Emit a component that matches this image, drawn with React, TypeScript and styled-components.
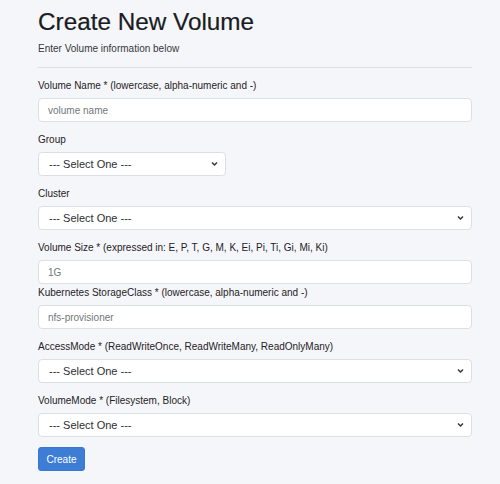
import React from "react";
import styled, { createGlobalStyle } from "styled-components";

const Global = createGlobalStyle`
  html, body { margin: 0; padding: 0; background: #f5f6f9; }
  body { font-family: "Liberation Sans", Arial, sans-serif; color: #212529; }
  * { box-sizing: border-box; }
`;

const Page = styled.div`
  padding: 7px 28px 0 38px;
  width: 500px;
  min-height: 484px;
  background: #f5f6f9;
`;

const Title = styled.h1`
  margin: 0;
  font-family: "Liberation Sans", Arial, sans-serif;
  font-size: 24.3px;
  font-weight: 400;
  line-height: 30px;
  color: #1a1c1f;
  -webkit-text-stroke: 0.2px #1a1c1f;
`;

const Subtitle = styled.p`
  margin: 4px 0 0;
  font-size: 10px;
  line-height: 16px;
  color: #35383c;
`;

const Rule = styled.hr`
  margin: 10px 0 0;
  border: 0;
  border-top: 1px solid #dcdee2;
`;

const Form = styled.form`
  display: flex;
  flex-direction: column;
  margin-top: 11px;
`;

const Field = styled.div<{ $mb: number }>`
  display: flex;
  flex-direction: column;
  margin-bottom: ${(p) => p.$mb}px;
`;

const Label = styled.label`
  font-size: 10px;
  line-height: 14px;
  margin-bottom: 5px;
  color: #1f2226;
  white-space: nowrap;
`;

const Input = styled.input`
  height: 24px;
  width: 100%;
  border: 1px solid #dcdfe3;
  border-radius: 4px;
  background: #fff;
  padding: 0 9px;
  font-family: inherit;
  font-size: 10px;
  color: #212529;
  &::placeholder { color: #72777c; }
`;

const SelectWrap = styled.div<{ $w?: number }>`
  position: relative;
  width: ${(p) => (p.$w ? `${p.$w}px` : "100%")};
`;

const Select = styled.select`
  appearance: none;
  -webkit-appearance: none;
  height: 24px;
  width: 100%;
  border: 1px solid #dcdfe3;
  border-radius: 4px;
  background: #fff;
  padding: 0 10px;
  font-family: inherit;
  font-size: 11px;
  color: #2b2f33;
`;

const Chevron = styled.svg`
  position: absolute;
  right: 8px;
  top: 9px;
  width: 7px;
  height: 6px;
  pointer-events: none;
`;

const Button = styled.button`
  align-self: flex-start;
  height: 24px;
  width: 47px;
  padding: 0;
  border: 1px solid #3a78d0;
  border-radius: 3px;
  background: #3e7dd6;
  color: #fff;
  font-family: inherit;
  font-size: 10px;
`;

const SelectBox = ({ w }: { w?: number }) => (
  <SelectWrap $w={w}>
    <Select defaultValue="">
      <option value="">--- Select One ---</option>
    </Select>
    <Chevron viewBox="0 0 7 6">
      <path d="M1 1.5 L3.5 4 L6 1.5" fill="none" stroke="#343a40" strokeWidth="1.5" />
    </Chevron>
  </SelectWrap>
);

export default function App() {
  return (
    <>
      <Global />
      <Page>
        <Title>Create New Volume</Title>
        <Subtitle>Enter Volume information below</Subtitle>
        <Rule />
        <Form onSubmit={(e) => e.preventDefault()}>
          <Field $mb={11}>
            <Label>Volume Name * (lowercase, alpha-numeric and -)</Label>
            <Input placeholder="volume name" />
          </Field>
          <Field $mb={11}>
            <Label>Group</Label>
            <SelectBox w={188} />
          </Field>
          <Field $mb={11}>
            <Label>Cluster</Label>
            <SelectBox />
          </Field>
          <Field $mb={2}>
            <Label>Volume Size * (expressed in: E, P, T, G, M, K, Ei, Pi, Ti, Gi, Mi, Ki)</Label>
            <Input placeholder="1G" />
          </Field>
          <Field $mb={11}>
            <Label>Kubernetes StorageClass * (lowercase, alpha-numeric and -)</Label>
            <Input placeholder="nfs-provisioner" />
          </Field>
          <Field $mb={11}>
            <Label>AccessMode * (ReadWriteOnce, ReadWriteMany, ReadOnlyMany)</Label>
            <SelectBox />
          </Field>
          <Field $mb={10}>
            <Label>VolumeMode * (Filesystem, Block)</Label>
            <SelectBox />
          </Field>
          <Button type="submit">Create</Button>
        </Form>
      </Page>
    </>
  );
}
